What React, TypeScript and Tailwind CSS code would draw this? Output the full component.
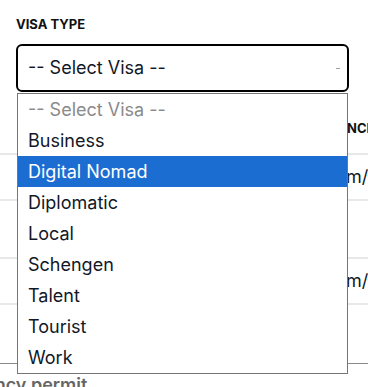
import React from "react";

const options = [
  "-- Select Visa --",
  "Business",
  "Digital Nomad",
  "Diplomatic",
  "Local",
  "Schengen",
  "Talent",
  "Tourist",
  "Work",
];

export default function App() {
  return (
    <div
      className="relative w-[368px] h-[387px] overflow-hidden bg-white text-[#111827]"
      style={{ fontFamily: "Inter, 'Noto Sans', sans-serif" }}
    >
      <div className="px-[16px] pt-[16px]">
        <div className="text-[13px] leading-[16px] font-bold uppercase text-[#111]">
          Visa Type
        </div>
        <div className="mt-[12px] h-[48px] w-[333px] rounded-[6px] border-2 border-black flex items-center justify-between pl-[10px] pr-[7px]">
          <span className="text-[18px] leading-none text-[#111827]">-- Select Visa --</span>
          <span className="block w-[4px] h-[1px] bg-[#9ca3af]" />
        </div>
      </div>

      {/* background table */}
      <div className="flex flex-col">
        <div className="h-[61px] flex items-end pb-[18px] pl-[347px] whitespace-nowrap overflow-hidden">
          <span className="text-[13px] font-bold leading-none text-[#111]">NCIES</span>
        </div>
        <div className="h-[2px] bg-[#e8e8e8]" />
        <div className="h-[44px] flex items-center pl-[346px] whitespace-nowrap overflow-hidden">
          <span className="text-[18px] leading-none text-[#111827]">m/yr</span>
        </div>
        <div className="h-[2px] bg-[#e8e8e8]" />
        <div className="h-[56px]" />
        <div className="h-[2px] bg-[#e8e8e8]" />
        <div className="h-[44px] flex items-center pl-[346px] whitespace-nowrap overflow-hidden">
          <span className="text-[18px] leading-none text-[#111827]">m/yr</span>
        </div>
        <div className="h-[2px] bg-[#e8e8e8]" />
        <div className="h-[58px]" />
        <div className="h-[1px] bg-[#8a8a8a]" />
        <div className="mt-[12px] -ml-[64px] whitespace-nowrap text-[18px] font-semibold leading-none text-[#666]">
          Residency permit
        </div>
      </div>

      {/* open dropdown */}
      <div className="absolute left-[17px] top-[93px] w-[331px] bg-white border border-[#767676] flex flex-col">
        {options.map((o, i) => (
          <div
            key={o}
            className={
              "h-[31px] flex items-center pl-[10px] text-[18px] leading-none " +
              (i === 0
                ? "text-[#8a8a8a]"
                : i === 2
                ? "bg-[#1b6dd1] text-white"
                : "text-[#111827]")
            }
          >
            {o}
          </div>
        ))}
      </div>
    </div>
  );
}
